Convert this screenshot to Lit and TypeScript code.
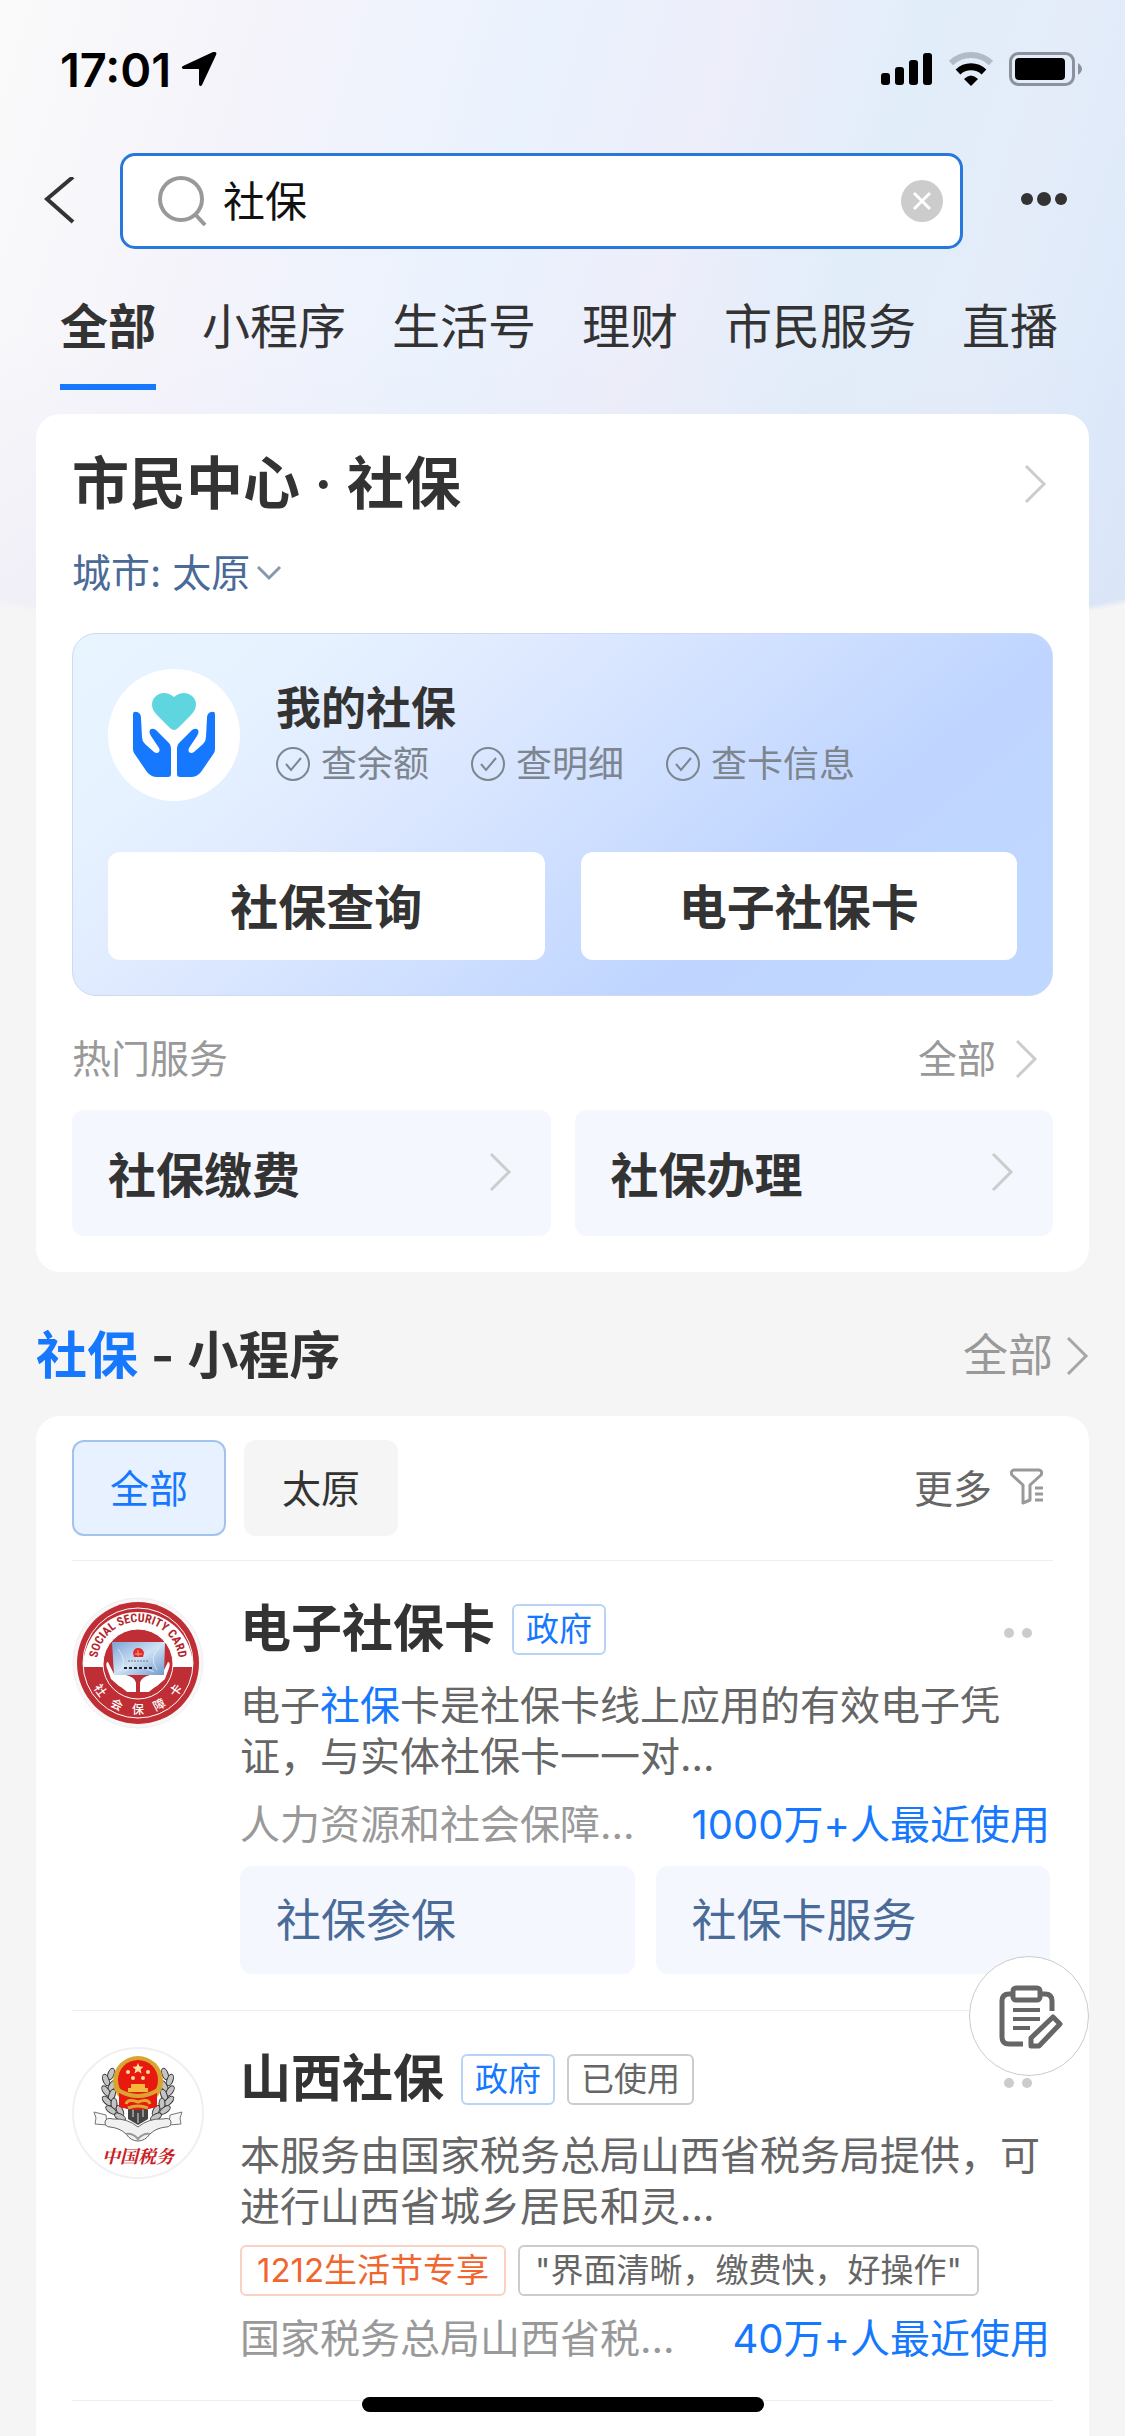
import { LitElement, html, svg, css } from "lit";
import { customElement, state } from "lit/decorators.js";
import { classMap } from "lit/directives/class-map.js";

const chevron = html`<svg class="chevron" viewBox="0 0 24 40" aria-hidden="true">
  <path d="M3 2 21 20 3 38" fill="none" stroke="currentColor" stroke-width="3" />
</svg>`;

const check = html`<svg class="check" viewBox="0 0 34 34" aria-hidden="true">
  <circle cx="17" cy="17" r="16" fill="none" stroke="currentColor" stroke-width="2" />
  <path d="M10 17l5 6 10-12" fill="none" stroke="currentColor" stroke-width="2" />
</svg>`;

const hand = svg`<path d="M25 45q0-3 4-2 4 1 4 6l1 19q0 4 3 7l9 8q3 2 5 0 1-2 0-4l-8-12q-3-5 0-7 2-1 5 1l13 13q2 2 2 5v26q0 3-3 3H49q-6 0-10-5L26 84q-1-2-1-4z" fill="#1677ff" />`;

const careLogo = html`<svg class="logo" viewBox="0 0 132 132" aria-hidden="true">
  <circle cx="66" cy="66" r="66" fill="#fff" />
  <path d="M62 59 49 46c-7-7-6-15-1-19 5-4 12-4 18 1 6-5 13-5 18-1 5 4 6 12-1 19L70 59q-4 4-8 0z" fill="#5fd5df" />
  ${hand}
  <g transform="translate(132 0) scale(-1 1)">${hand}</g>
</svg>`;

const sealChars: [string, string][] = [["社", "20%"], ["会", "35%"], ["保", "50%"], ["障", "65%"], ["卡", "80%"]];

const cardLogo = html`<svg class="logo" viewBox="0 0 132 132" role="img" aria-label="社会保障卡">
  <defs>
    <path id="arc-top" d="M26 75 A41 41 0 1 1 106 75" />
    <path id="arc-bottom" d="M15 66 A51 51 0 0 0 117 66" />
    <linearGradient id="card-face" x1="0" y1="0" x2="1" y2="1">
      <stop offset="0" stop-color="#7ba3d3" />
      <stop offset="0.5" stop-color="#cfe2f5" />
      <stop offset="1" stop-color="#7099cc" />
    </linearGradient>
  </defs>
  <circle cx="66" cy="66" r="65" fill="#f8f6f6" stroke="#f1eeee" stroke-width="1" />
  <circle cx="66" cy="66" r="61" fill="#bf2e35" />
  <circle cx="66" cy="66" r="55" fill="none" stroke="#fff" stroke-width="1" />
  <path d="M11 70 A55 55 0 1 1 121 70 L101 70 A35 35 0 1 0 31 70z" fill="#fff" />
  <circle cx="66" cy="67" r="35" fill="#bf2e35" stroke="#fff" stroke-width="1" />
  <path d="M36 65c-2 0-2 3-1 6l4 11 8 7c5 3 7 5 8 6h9V86c-1-5-6-7-10-8l-12-1zM96 65c2 0 2 3 1 6l-4 11-8 7c-5 3-7 5-8 6h-9V86c1-5 6-7 10-8l12-1z" fill="#fff" />
  <path d="M40 45h53l-1 33H42z" fill="url(#card-face)" />
  <path d="M46 52q10 12 2 22M88 50q-12 10-3 23M52 74q14-8 30 1" fill="none" stroke="#e8f2fb" stroke-width="1" opacity="0.700" />
  <path d="M61 56q1-5 5-5 5 0 6 5l-1 4H62z" fill="#e02a28" />
  <path d="M66 53v6M63 57h7" stroke="#f4a090" stroke-width="1" />
  <path d="M56 64h21" stroke="#66788f" stroke-width="1" stroke-dasharray="2 1" />
  <path d="M52 71h28" stroke="#20242c" stroke-width="2" stroke-dasharray="3 2" />
  <text class="seal-latin"><textPath href="#arc-top" startOffset="50%">SOCIAL SECURITY CARD</textPath></text>
  ${sealChars.map(([c, at]) => svg`<text class="seal-cjk"><textPath href="#arc-bottom" startOffset=${at}>${c}</textPath></text>`)}
</svg>`;

const grain = (x: number, y: number, a: number) =>
  svg`<ellipse cx=${x} cy=${y} rx="3" ry="6" transform="rotate(${a} ${x} ${y})" fill="#c4c4c4" stroke="#333" stroke-width="1" />`;
const leftWheat = [
  [39, 27, 20], [34, 33, -20], [40, 39, 30], [34, 44, -35], [40, 48, 20], [35, 54, -45],
  [42, 57, 0], [39, 63, -55], [48, 64, -25], [48, 70, -60],
].map(([x, y, a]) => grain(x, y, a));

const taxLogo = html`<svg class="logo" viewBox="0 0 132 132" role="img" aria-label="中国税务">
  <circle cx="66" cy="66" r="65" fill="#fff" stroke="#f0f0f0" stroke-width="2" />
  ${leftWheat}
  <g transform="translate(132 0) scale(-1 1)">${leftWheat}</g>
  <path d="M56 60h20v12l-10 6-10-6z" fill="#444" />
  <path d="M66 66v10M61 62v8M71 62v8" stroke="#ddd" stroke-width="1" />
  <circle cx="66" cy="34" r="25" fill="#d9a531" />
  <circle cx="66" cy="33" r="20" fill="#e8190f" />
  <path d="M47 46h38v14q-19 6-38 0z" fill="#e8190f" />
  <path d="M46 43q20 12 40 0" fill="none" stroke="#d9a531" stroke-width="4" />
  <path d="M54 57q2-6 12-2 10-4 12 2M56 61q10-4 20 0" fill="none" stroke="#e0a62f" stroke-width="3" />
  <path d="M56 45v-4h3v-4h14v4h3v4z" fill="#f3b83c" />
  <path d="m66 16 1.500 3.500 4 .3-3 2.600 1 4-3.500-2.200-3.500 2.200 1-4-3-2.600 4-.3z" fill="#ffe2a0" />
  <circle cx="56" cy="25" r="2" fill="#ffd9a0" /><circle cx="76" cy="25" r="2" fill="#ffd9a0" />
  <circle cx="61" cy="31" r="2" fill="#ffd9a0" /><circle cx="71" cy="31" r="2" fill="#ffd9a0" />
  <path d="M34 68 22 65l2 6-1 6 12 1zM98 68l12-3-2 6 1 6-12 1z" fill="#f7f7f7" stroke="#777" stroke-width="1" />
  <path d="M33 75q1-5 8-3 14-1 25 8 11-9 25-8 7-2 8 3 0 5-5 5-10 1-16 7-5 7-12 7t-12-7q-6-6-16-7-5 0-5-5z" fill="#f1f1f1" stroke="#666" stroke-width="1" />
  <path d="M54 87q7-1 12 5 5-6 12-5" fill="none" stroke="#999" stroke-width="2" />
  <text class="tax-name" x="66" y="116">中国税务</text>
</svg>`;

interface MiniProgram {
  name: string;
  logo: unknown;
  used: boolean;
  description: unknown;
  promo?: string;
  review?: string;
  provider: string;
  users: string;
  links: string[];
}

const programs: MiniProgram[] = [
  {
    name: "电子社保卡",
    logo: cardLogo,
    used: false,
    description: html`电子<em class="hit">社保</em>卡是社保卡线上应用的有效电子凭证，与实体社保卡一一对...`,
    provider: "人力资源和社会保障...",
    users: "1000万+人最近使用",
    links: ["社保参保", "社保卡服务"],
  },
  {
    name: "山西社保",
    logo: taxLogo,
    used: true,
    description: "本服务由国家税务总局山西省税务局提供，可进行山西省城乡居民和灵...",
    promo: "1212生活节专享",
    review: '"界面清晰，缴费快，好操作"',
    provider: "国家税务总局山西省税...",
    users: "40万+人最近使用",
    links: [],
  },
];

@customElement("app-root")
export class AppRoot extends LitElement {
  @state() private tab = "全部";
  @state() private area = "全部";
  @state() private query = "社保";

  static styles = css`
    :host {
      display: block;
      font-family: Inter, "Noto Sans CJK SC", sans-serif;
      color: #333;
    }
    * { box-sizing: border-box; }
    svg { display: block; flex: none; }
    a { color: inherit; text-decoration: none; }
    button {
      font: inherit;
      color: inherit;
      background: none;
      border: 0;
      padding: 0;
      margin: 0;
      cursor: pointer;
    }
    h1, h2, h3, p { margin: 0; font-weight: 600; }
    p { font-weight: 400; }
    .page {
      position: relative;
      display: flex;
      flex-direction: column;
      min-height: 100vh;
      background:
        radial-gradient(ellipse 125% 660px at 50% 0, transparent 99%, #f5f5f5 100%),
        linear-gradient(transparent 50%, rgba(220, 215, 235, 0.250)) 0 0 / 100% 660px no-repeat,
        linear-gradient(107deg, #fafafa 0, #f4f3fb 22%, #eaf2fd 42%, #edeefa 56%, #e2edfa 70%, #e4ecf9 82%, #d8e8fb 100%) 0 0 / 100% 660px no-repeat,
        #f5f5f5;
    }
    .status {
      display: flex;
      align-items: center;
      justify-content: space-between;
      height: 138px;
      padding: 0 42px 0 60px;
      color: #000;
    }
    .clock, .signals { display: flex; align-items: center; }
    .clock { gap: 10px; font-size: 47px; font-weight: 600; }
    .arrow { width: 36px; height: 36px; }
    .signals { gap: 15px; }
    .bars { width: 52px; height: 34px; }
    .wifi { width: 46px; height: 34px; }
    .battery { width: 74px; height: 34px; }

    .search-row {
      display: flex;
      align-items: center;
      padding: 15px 54px 0 42px;
    }
    .back-icon { width: 36px; height: 48px; }
    .search-box {
      flex: 1;
      display: flex;
      align-items: center;
      height: 96px;
      margin: 0 54px 0 42px;
      padding: 0 17px 0 35px;
      gap: 15px;
      border: 3px solid #2878dc;
      border-radius: 15px;
      background: #fff;
    }
    .search-icon { width: 50px; height: 50px; }
    .search-input {
      flex: 1;
      min-width: 0;
      border: 0;
      outline: 0;
      padding: 0 0 5px;
      background: none;
      font: inherit;
      font-size: 42px;
      color: #111;
    }
    .clear-icon { width: 42px; height: 42px; }
    .more-icon { width: 54px; height: 30px; }

    .tabs {
      display: flex;
      gap: 46px;
      padding: 45px 60px 24px;
      overflow: hidden;
      white-space: nowrap;
    }
    .tab {
      font-size: 48px;
      line-height: 66px;
      padding-bottom: 24px;
      border-bottom: 6px solid transparent;
    }
    .tab.on { font-weight: 700; border-color: #1677ff; }

    .card { margin: 0 36px; padding: 0 36px; background: #fff; border-radius: 24px; }
    .center { padding-top: 34px; padding-bottom: 36px; }
    .row { display: flex; align-items: center; justify-content: space-between; }
    .chevron { width: 24px; height: 40px; color: #ccc; }
    .center-title { font-size: 57px; line-height: 72px; }
    .center-head { padding-right: 6px; }
    .city {
      display: flex;
      align-items: center;
      gap: 6px;
      margin: 26px 0 33px;
      font-size: 39px;
      line-height: 54px;
      color: #4a6a98;
    }
    .down { width: 26px; height: 16px; }

    .mine {
      padding: 35px;
      border: 1px solid #ccdaf2;
      border-radius: 24px;
      background: linear-gradient(140deg, #e8f5ff 0, #e6f2ff 18%, #dee9ff 35%, #bfd5ff 71%, #c0d8ff 100%);
    }
    .mine-head { display: flex; align-items: center; gap: 36px; }
    .logo { width: 132px; height: 132px; }
    .mine-title { font-size: 45px; line-height: 54px; margin-bottom: 4px; }
    .checks { display: flex; gap: 42px; font-size: 36px; line-height: 48px; color: #7d858e; }
    .check-item { display: flex; align-items: center; gap: 11px; }
    .check { width: 34px; height: 34px; }
    .pair { display: grid; grid-template-columns: 1fr 1fr; }
    .mine-actions { gap: 36px; margin-top: 51px; }
    .mine-action {
      height: 108px;
      padding-bottom: 4px;
      border-radius: 12px;
      background: #fff;
      font-size: 48px;
      font-weight: 600;
    }
    .hot-head {
      margin: 36px 0 24px;
      padding-right: 15px;
      font-size: 39px;
      line-height: 54px;
      color: #999;
    }
    .hot-label { font-weight: 400; font-size: 39px; }
    .all { display: flex; align-items: center; gap: 18px; }
    .hot { gap: 24px; }
    .hot-link {
      display: flex;
      align-items: center;
      justify-content: space-between;
      height: 126px;
      padding: 0 39px 2px 36px;
      border-radius: 12px;
      background: #f4f7fe;
      font-size: 48px;
      font-weight: 600;
    }

    .section-head { margin: 48px 36px 24px; line-height: 72px; }
    .section-title { font-size: 51px; }
    .hit { color: #1677ff; font-style: normal; }
    .section-all { gap: 12px; font-size: 45px; color: #999; }
    .section-all .chevron { color: #a6a6a6; }

    .results { flex: 1; padding-top: 24px; padding-bottom: 30px; border-radius: 24px 24px 0 0; }
    .filters { padding-bottom: 24px; border-bottom: 1px solid #eee; }
    .chips { display: flex; gap: 18px; }
    .chip {
      height: 96px;
      padding: 0 36px 4px;
      border: 2px solid #f5f5f5;
      border-radius: 12px;
      background: #f5f5f5;
      font-size: 39px;
    }
    .chip.on { border-color: #a3c3ee; background: #e7f1ff; color: #1677ff; }
    .more {
      display: flex;
      align-items: center;
      gap: 18px;
      padding: 0 7px 4px 0;
      font-size: 39px;
      color: #666;
    }
    .funnel { width: 36px; height: 38px; }

    .item {
      display: flex;
      align-items: flex-start;
      gap: 36px;
      padding: 36px 0;
      border-bottom: 1px solid #eee;
    }
    .body { flex: 1; min-width: 0; padding-right: 3px; }
    .item-head { display: flex; align-items: center; height: 64px; }
    .item-title { font-size: 51px; line-height: 64px; margin-right: 17px; }
    .tag {
      height: 51px;
      margin-right: 12px;
      padding: 0 12px;
      border: 2px solid #ccc;
      border-radius: 6px;
      font-size: 33px;
      line-height: 47px;
      color: #666;
      white-space: nowrap;
    }
    .tag.gov { border-color: #b9d3f7; color: #1677ff; }
    .tag.promo { border-color: #f9d2c3; color: #f0662e; }
    .dots { display: flex; gap: 8px; margin: 8px 18px 0 auto; }
    .dot { width: 10px; height: 10px; border-radius: 50%; background: #ccc; }
    .desc { margin-top: 19px; font-size: 40px; line-height: 51px; color: #666; }
    .tags { display: flex; margin-top: 13px; }
    .tags .tag { padding: 0 15px; }
    .meta { margin-top: 17px; font-size: 40px; line-height: 51px; color: #999; white-space: nowrap; }
    .users { color: #1677ff; }
    .links { gap: 21px; margin-top: 16px; }
    .link {
      height: 108px;
      padding: 0 36px;
      border-radius: 12px;
      background: #f4f7fe;
      font-size: 45px;
      line-height: 110px;
      color: #4a6a98;
    }

    .feedback {
      position: absolute;
      right: 36px;
      bottom: 360px;
      width: 120px;
      height: 120px;
      border: 1px solid #ccc;
      border-radius: 50%;
      background: #fff;
    }
    .feedback-icon { width: 118px; height: 118px; }
    .home {
      position: absolute;
      left: 0;
      right: 0;
      bottom: 24px;
      width: 402px;
      height: 15px;
      margin: 0 auto;
      border-radius: 8px;
      background: #000;
    }
    .seal-latin { font: 700 12px "Liberation Sans Narrow", "Roboto Condensed", Roboto, sans-serif; fill: #b3272e; text-anchor: middle; }
    .seal-cjk { font: 500 12px "Noto Sans CJK SC", sans-serif; fill: #fff; text-anchor: middle; }
    .tax-name { font: italic 700 18px "Noto Serif CJK SC", "Noto Sans CJK SC", serif; fill: #c8201f; text-anchor: middle; }
  `;

  private renderStatus() {
    return html`<div class="status">
      <div class="clock">
        <span>17:01</span>
        <svg class="arrow" viewBox="0 0 36 36" aria-hidden="true">
          <path d="M34 1c1 0 2 1 1 3L21 34c-1 2-3 1-3-1V19c0-1 0-1-1-1H3c-2 0-3-2-1-3L32 1z" fill="currentColor" />
        </svg>
      </div>
      <div class="signals">
        <svg class="bars" viewBox="0 0 52 34" aria-hidden="true">
          <rect x="0" y="21" width="9" height="12" rx="3" /><rect x="14" y="15" width="9" height="18" rx="3" />
          <rect x="28" y="8" width="9" height="25" rx="3" /><rect x="42" y="1" width="9" height="32" rx="3" />
        </svg>
        <svg class="wifi" viewBox="0 0 46 34" aria-hidden="true">
          <path d="M3 11a29 29 0 0 1 40 0" fill="none" stroke="#b2bac8" stroke-width="6" />
          <path d="M10 20a19 19 0 0 1 26 0" fill="none" stroke="#000" stroke-width="7" />
          <path d="M16 27q7-7 14 0l-7 7z" />
        </svg>
        <svg class="battery" viewBox="0 0 74 34" aria-hidden="true">
          <rect x="1.500" y="1.500" width="63" height="31" rx="8" fill="none" stroke="#8b929d" stroke-width="3" />
          <rect x="6" y="6" width="50" height="22" rx="4" />
          <path d="M69 11q8 6 0 12z" fill="#8b929d" />
        </svg>
      </div>
    </div>`;
  }

  private renderSearch() {
    return html`<form class="search-row" @submit=${(e: Event) => e.preventDefault()}>
      <button class="back" type="button" aria-label="返回">
        <svg class="back-icon" viewBox="0 0 36 48"><path d="M31 0 5 22l26 23" fill="none" stroke="#333" stroke-width="4" /></svg>
      </button>
      <label class="search-box">
        <svg class="search-icon" viewBox="0 0 50 50" aria-hidden="true">
          <circle cx="23" cy="23" r="21" fill="none" stroke="#999" stroke-width="4" />
          <path d="m37 38 10 11" stroke="#999" stroke-width="4" />
        </svg>
        <input class="search-input" type="text" aria-label="搜索" .value=${this.query}
          @input=${(e: Event) => (this.query = (e.target as HTMLInputElement).value)} />
        <button type="button" aria-label="清除" @click=${() => (this.query = "")}>
          <svg class="clear-icon" viewBox="0 0 42 42">
            <circle cx="21" cy="21" r="21" fill="#ccc" />
            <path d="m13 13 16 16M29 13 13 29" stroke="#fff" stroke-width="3" />
          </svg>
        </button>
      </label>
      <button type="button" aria-label="更多">
        <svg class="more-icon" viewBox="0 0 54 30" fill="#333">
          <circle cx="10" cy="13" r="6" /><circle cx="27" cy="13" r="7" /><circle cx="44" cy="13" r="6" />
        </svg>
      </button>
    </form>`;
  }

  private renderCenter() {
    return html`<section class="card center">
      <a class="row center-head" href="#center"><h1 class="center-title">市民中心 · 社保</h1>${chevron}</a>
      <button class="city">
        城市: 太原
        <svg class="down" viewBox="0 0 26 16"><path d="M2 2l11 11L24 2" fill="none" stroke="#8797ae" stroke-width="3" /></svg>
      </button>
      <div class="mine">
        <div class="mine-head">
          ${careLogo}
          <div>
            <h2 class="mine-title">我的社保</h2>
            <div class="checks">
              ${["查余额", "查明细", "查卡信息"].map((t) => html`<span class="check-item">${check}${t}</span>`)}
            </div>
          </div>
        </div>
        <div class="pair mine-actions">
          <button class="mine-action">社保查询</button>
          <button class="mine-action">电子社保卡</button>
        </div>
      </div>
      <div class="row hot-head">
        <h2 class="hot-label">热门服务</h2>
        <a class="all" href="#hot">全部${chevron}</a>
      </div>
      <div class="pair hot">
        <a class="hot-link" href="#pay">社保缴费${chevron}</a>
        <a class="hot-link" href="#handle">社保办理${chevron}</a>
      </div>
    </section>`;
  }

  private renderItem(p: MiniProgram) {
    return html`<article class="item">
      ${p.logo}
      <div class="body">
        <div class="item-head">
          <h3 class="item-title">${p.name}</h3>
          <span class="tag gov">政府</span>
          ${p.used ? html`<span class="tag">已使用</span>` : null}
          <button class="dots" aria-label="更多操作"><span class="dot"></span><span class="dot"></span></button>
        </div>
        <p class="desc">${p.description}</p>
        ${p.promo ? html`<div class="tags"><span class="tag promo">${p.promo}</span><span class="tag">${p.review}</span></div>` : null}
        <div class="row meta"><span>${p.provider}</span><span class="users">${p.users}</span></div>
        ${p.links.length
          ? html`<div class="pair links">${p.links.map((l) => html`<a class="link" href="#service">${l}</a>`)}</div>`
          : null}
      </div>
    </article>`;
  }

  render() {
    return html`<main class="page">
      ${this.renderStatus()} ${this.renderSearch()}
      <nav class="tabs">
        ${["全部", "小程序", "生活号", "理财", "市民服务", "直播"].map(
          (t) => html`<button class=${classMap({ tab: true, on: t === this.tab })} @click=${() => (this.tab = t)}>${t}</button>`
        )}
      </nav>
      ${this.renderCenter()}
      <div class="row section-head">
        <h2 class="section-title"><span class="hit">社保</span> - 小程序</h2>
        <a class="all section-all" href="#all">全部${chevron}</a>
      </div>
      <section class="card results">
        <div class="row filters">
          <div class="chips">
            ${["全部", "太原"].map(
              (a) => html`<button class=${classMap({ chip: true, on: a === this.area })} @click=${() => (this.area = a)}>${a}</button>`
            )}
          </div>
          <button class="more">
            更多
            <svg class="funnel" viewBox="0 0 36 38" fill="none" stroke="#999" stroke-width="3">
              <path d="M4 3h25q4 1 2 5L20 18v15l-7 3V18L2 8Q0 4 4 3z" stroke-linejoin="round" />
              <path d="M25 21h8M25 27h8M25 33h8" />
            </svg>
          </button>
        </div>
        ${programs.map((p) => this.renderItem(p))}
      </section>
      <button class="feedback" aria-label="反馈">
        <svg class="feedback-icon" viewBox="0 0 118 118" fill="none" stroke="#666" stroke-width="5">
          <path d="M53 87H39q-7 0-7-7V44q0-7 7-7h4M71 37h4q7 0 7 7v10" />
          <rect x="43" y="31" width="27" height="12" rx="3" />
          <path d="M43 53h27M43 62h27M43 71h17" stroke-width="4" />
          <path d="m83 60 7 7-21 22h-8v-8z" stroke-linejoin="round" />
        </svg>
      </button>
      <div class="home"></div>
    </main>`;
  }
}
